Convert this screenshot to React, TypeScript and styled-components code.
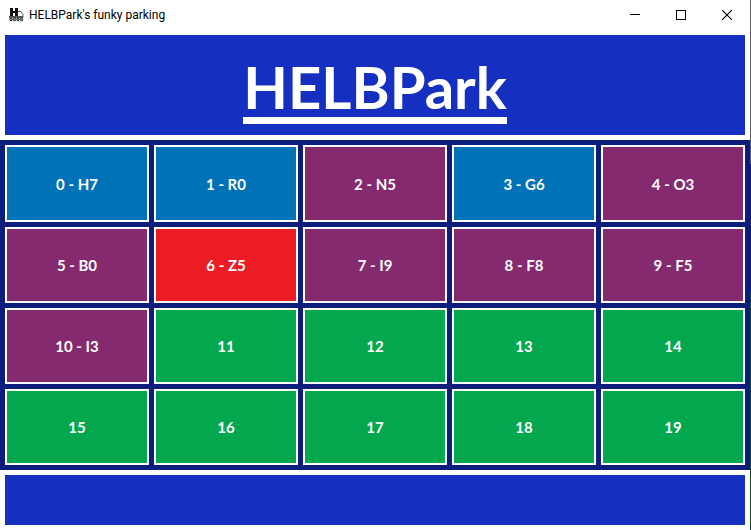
import React from "react";
import styled, { createGlobalStyle } from "styled-components";

const GlobalStyle = createGlobalStyle`
  * { box-sizing: border-box; }
  html, body, #root { height: 100%; }
  body { margin: 0; background: #fff; overflow: hidden; }
`;

const Window = styled.div`
  display: flex;
  flex-direction: column;
  min-height: 100vh;
  border-right: 1px solid;
  border-image: linear-gradient(#5c5f62 31%, #131c58 31%, #131c58 55%, #12452f 55%) 1;
  background: #fff;
`;

const TitleBar = styled.header`
  display: flex;
  align-items: center;
  height: 30px;
  padding-left: 8px;
  font: 12px/16px Roboto, "Open Sans", sans-serif;
  color: #000;
`;

const AppIcon = styled.svg`
  width: 17px;
  height: 16px;
  margin-right: 4px;
  flex: none;
`;

const WindowTitle = styled.span`
  flex: 1;
  white-space: nowrap;
`;

const WindowButton = styled.button`
  display: flex;
  align-items: center;
  justify-content: center;
  width: 46px;
  height: 28px;
  padding: 0;
  border: 0;
  background: transparent;
  color: #000;
`;

const Banner = styled.section`
  display: flex;
  align-items: flex-end;
  justify-content: center;
  height: 100px;
  margin: 5px;
  padding-bottom: 11px;
  background: #152fc0;
`;

const Brand = styled.h1`
  margin: 0;
  border-bottom: 7px solid #fff;
  color: #fff;
  font: 700 58px/60px Lato, sans-serif;
`;

const Lot = styled.main`
  flex: 1;
  display: grid;
  grid-template-columns: repeat(5, 1fr);
  grid-template-rows: 77fr 76fr 76fr 76fr;
  gap: 5px;
  padding: 5px;
  background: #0c1d7c;
`;

const colors = {
  moto: "#0072b7",
  car: "#862a70",
  van: "#eb1c24",
  free: "#02a74e",
};

type Kind = keyof typeof colors;

const Space = styled.button<{ $kind: Kind }>`
  padding: 0;
  border: 2px solid #fff;
  border-radius: 0;
  background: ${(p) => colors[p.$kind]};
  color: #fff;
  font: 700 15px/20px Lato, sans-serif;
`;

const StatusBar = styled.footer`
  height: 50px;
  margin: 5px;
  background: #152fc0;
`;

const taken: { plate: string; kind: Kind }[] = [
  { plate: "H7", kind: "moto" },
  { plate: "R0", kind: "moto" },
  { plate: "N5", kind: "car" },
  { plate: "G6", kind: "moto" },
  { plate: "O3", kind: "car" },
  { plate: "B0", kind: "car" },
  { plate: "Z5", kind: "van" },
  { plate: "I9", kind: "car" },
  { plate: "F8", kind: "car" },
  { plate: "F5", kind: "car" },
  { plate: "I3", kind: "car" },
];

const spaces = Array.from({ length: 20 }, (_, i) => {
  const vehicle = taken[i];
  return {
    label: vehicle ? `${i} - ${vehicle.plate}` : `${i}`,
    kind: vehicle ? vehicle.kind : ("free" as Kind),
  };
});

export default function App() {
  return (
    <>
      <GlobalStyle />
      <Window>
        <TitleBar>
          <AppIcon viewBox="0 0 17 16" aria-hidden="true">
            <path d="M2 1h3v3h2V1h3v8H7V6H5v3H2z" fill="#111" />
            <path d="M10 4.500h3l2 3v3h-5" fill="none" stroke="#555" />
            <path d="M1 9h14v2H1z" fill="#555" />
            <g fill="#999" stroke="#222">
              <circle cx="3" cy="12.500" r="1.300" />
              <circle cx="6.500" cy="12.500" r="1.300" />
              <circle cx="10" cy="12.500" r="1.300" />
              <circle cx="13.500" cy="12.500" r="1.300" />
            </g>
          </AppIcon>
          <WindowTitle>HELBPark's funky parking</WindowTitle>
          <WindowButton aria-label="Minimize">
            <svg width="10" height="10" shapeRendering="crispEdges">
              <path d="M0 4h10v1H0z" fill="currentColor" />
            </svg>
          </WindowButton>
          <WindowButton aria-label="Maximize">
            <svg width="10" height="10" shapeRendering="crispEdges">
              <path d="M.5.5h9v9h-9z" fill="none" stroke="currentColor" />
            </svg>
          </WindowButton>
          <WindowButton aria-label="Close">
            <svg width="10" height="10">
              <path d="M0 0l10 10M10 0L0 10" stroke="currentColor" strokeWidth="1.100" />
            </svg>
          </WindowButton>
        </TitleBar>
        <Banner>
          <Brand>HELBPark</Brand>
        </Banner>
        <Lot>
          {spaces.map((s) => (
            <Space key={s.label} $kind={s.kind}>
              {s.label}
            </Space>
          ))}
        </Lot>
        <StatusBar />
      </Window>
    </>
  );
}
